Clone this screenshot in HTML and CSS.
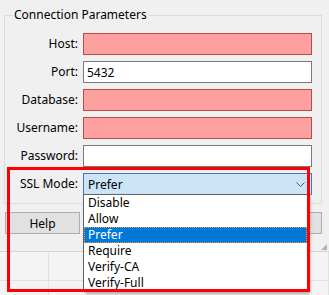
FILE: index.html
```html
<!DOCTYPE html>
<html lang="en">
<head>
    <meta charset="UTF-8">
    <meta name="viewport" content="width=device-width, initial-scale=1.0">
    <title>Connection Parameters</title>
    <link rel="stylesheet" href="styles.css">
</head>
<body>
    <div class="dialog">
        <fieldset class="group">
            <legend>Connection Parameters</legend>
            <div class="form">
                <label for="host">Host:</label>
                <input type="text" id="host" class="field invalid">

                <label for="port">Port:</label>
                <input type="text" id="port" class="field" value="5432">

                <label for="database">Database:</label>
                <input type="text" id="database" class="field invalid">

                <label for="username">Username:</label>
                <input type="text" id="username" class="field invalid">

                <label for="password">Password:</label>
                <input type="password" id="password" class="field">

                <label>SSL Mode:</label>
                <div class="combo">
                    <div class="combo-box">
                        <span>Prefer</span>
                        <svg class="chevron" width="9" height="5" viewBox="0 0 9 5">
                            <path d="M0.5 0.5 L4.5 4.5 L8.5 0.5" fill="none" stroke="#555" stroke-width="1"/>
                        </svg>
                    </div>
                    <ul class="combo-list">
                        <li>Disable</li>
                        <li>Allow</li>
                        <li class="selected">Prefer</li>
                        <li>Require</li>
                        <li>Verify-CA</li>
                        <li>Verify-Full</li>
                    </ul>
                </div>
            </div>
        </fieldset>

        <div class="buttons">
            <button class="btn">Help</button>
            <button class="btn">OK</button>
        </div>
        <div class="grip"></div>
    </div>

    <div class="backdrop">
        <div class="cell"></div><div class="cell"></div>
        <div class="cell"></div><div class="cell"></div>
    </div>

    <!-- highlight around the SSL mode picker -->
    <div class="highlight"></div>
</body>
</html>
```

FILE: styles.css
```css
body {
    margin: 0;
    padding: 0;
    width: 329px;
    height: 295px;
    overflow: hidden;
    position: relative;
    font-family: "Noto Sans", "Open Sans", sans-serif;
    font-size: 12px;
    color: #000;
    background-color: #f0f0f0;
}
.dialog {
    position: relative;
    height: 244px;
    padding-left: 4px;
    box-sizing: border-box;
}
.group {
    width: 318px;
    box-sizing: border-box;
    margin: 7px 0 0 0;
    padding: 10px 9px 8px 0;
    border: 1px solid #dcdcdc;
}
.group legend {
    margin-left: 7px;
    padding: 0 2px;
    line-height: 16px;
}
.form {
    display: grid;
    grid-template-columns: 73px 229px;
    grid-auto-rows: 22px;
    column-gap: 5px;
    row-gap: 6px;
    align-items: center;
}
.form label {
    text-align: right;
    line-height: 22px;
}
.field {
    box-sizing: border-box;
    width: 229px;
    height: 22px;
    margin: 0;
    padding: 0 3px;
    border: 1px solid #7a7a7a;
    background-color: #fff;
    font-family: inherit;
    font-size: 12px;
    outline: none;
}
.field.invalid {
    background-color: #ffa0a0;
    border-color: #b84c4c;
}
.combo {
    position: relative;
    height: 22px;
}
.combo-box {
    box-sizing: border-box;
    height: 22px;
    display: flex;
    align-items: center;
    justify-content: space-between;
    padding: 0 6px 0 4px;
    border: 1px solid #3d7ab3;
    border-bottom-color: #8a8a8a;
    background-color: #cce4f7;
}
.chevron {
    display: block;
}
.combo-list {
    position: absolute;
    top: 21px;
    left: 0;
    width: 225px;
    box-sizing: border-box;
    margin: 0;
    padding: 0;
    list-style: none;
    background-color: #fff;
    border: 1px solid #646464;
    box-shadow: 2px 2px 3px rgba(0, 0, 0, 0.3);
    z-index: 2;
}
.combo-list li {
    height: 16px;
    line-height: 16px;
    padding-left: 4px;
    box-sizing: border-box;
}
.combo-list li.selected {
    background-color: #0078d7;
    color: #fff;
    outline: 1px dotted #f39a3b;
    outline-offset: -1px;
}
.buttons {
    display: flex;
    justify-content: space-between;
    width: 317px;
    margin: 8px 0 0 1px;
}
.btn {
    width: 75px;
    height: 22px;
    margin: 0;
    padding: 0;
    border: 1px solid #adadad;
    background-color: #e1e1e1;
    font-family: inherit;
    font-size: 12px;
    color: #000;
}
.grip {
    position: absolute;
    right: 2px;
    bottom: 1px;
    width: 6px;
    height: 6px;
    background:
        radial-gradient(circle, #b5b5b5 0.8px, transparent 1px) 0 0 / 2px 2px;
    clip-path: polygon(100% 0, 100% 100%, 0 100%);
}
.backdrop {
    display: grid;
    grid-template-columns: 49px 1fr;
    grid-template-rows: 29px 1fr;
    height: 51px;
    box-sizing: border-box;
    border-top: 1px solid #d4d4d4;
    background-color: #f4f4f4;
}
.cell {
    border-right: 1px solid #e2e2e2;
    border-bottom: 1px solid #e2e2e2;
}
.highlight {
    position: absolute;
    left: 7px;
    top: 167px;
    width: 303px;
    height: 125px;
    box-sizing: border-box;
    border: 3px solid #ff0000;
    z-index: 3;
}
```
